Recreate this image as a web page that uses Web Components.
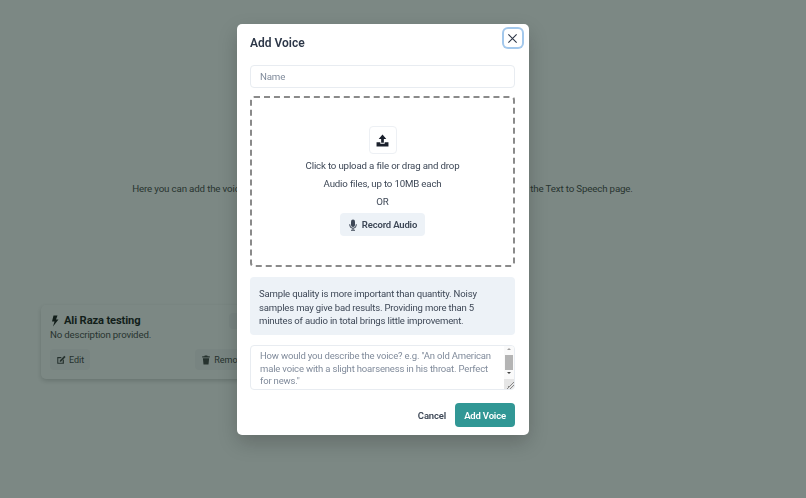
<!DOCTYPE html>
<html>
<head>
<meta charset="utf-8">
<title>Add Voice</title>
<style>
    html, body { margin: 0; height: 100%; }
    body { font-family: Roboto, "Open Sans", sans-serif; overflow: hidden; background: #fff; }
</style>
</head>
<body>
<voice-page></voice-page>
<add-voice-modal></add-voice-modal>

<script>
const ICONS = {
    upload: `<svg viewBox="0 0 24 24" width="13" height="13"><path fill="currentColor" d="M12 1 5 9h4.500v7h5V9H19zM1 15h7v3h8v-3h7v8H1z"/></svg>`,
    mic: `<svg viewBox="0 0 24 24" width="12" height="12"><path fill="currentColor" d="M12 1a4 4 0 0 0-4 4v7a4 4 0 0 0 8 0V5a4 4 0 0 0-4-4z"/><path fill="none" stroke="currentColor" stroke-width="2" d="M5.500 10.500V12a6.500 6.500 0 0 0 13 0v-1.500M12 18.500V22M8 22.500h8"/></svg>`,
    close: `<svg viewBox="0 0 24 24" width="11" height="11"><path fill="none" stroke="currentColor" stroke-width="2.400" d="M3 3l18 18M21 3 3 21"/></svg>`,
    bolt: `<svg viewBox="0 0 24 24" width="12" height="12"><path fill="currentColor" d="M9 1h8l-3 8h5L8 23l3-10H6z"/></svg>`,
    edit: `<svg viewBox="0 0 24 24" width="10" height="10"><path fill="currentColor" d="M3 5h11l-3 3H5.500v10.500H16V13l3-3v11H3zM20 2l3 3-11 11H9v-3z"/></svg>`,
    trash: `<svg viewBox="0 0 24 24" width="10" height="10"><path fill="currentColor" d="M9 1h6l1 2h5v3H3V3h5zM4.500 8h15L18 23H6z"/></svg>`
};

// the small grey button used on the voice card
customElements.define("soft-button", class extends HTMLElement {
    constructor() {
        super();
        this.attachShadow({ mode: "open" });
        this.shadowRoot.innerHTML = `
        <style>
            :host {
                display: inline-flex;
                align-items: center;
                gap: 3px;
                height: 21px;
                padding: 0 6px;
                border-radius: 4px;
                background: #f6f6f8;
                color: #444;
                font-size: 9px;
                font-weight: 400;
            }
            span { display: flex; }
        </style>
        <span>${ICONS[this.dataset.icon] || ""}</span><slot></slot>`;
    }
});

customElements.define("voice-card", class extends HTMLElement {
    constructor() {
        super();
        this.attachShadow({ mode: "open" });
        this.shadowRoot.innerHTML = `
        <style>
            :host {
                display: block;
                box-sizing: border-box;
                width: 290px;
                height: 74px;
                padding: 8px 9px;
                border-radius: 5px;
                background: #fff;
                box-shadow: 0 2px 5px rgba(0, 0, 0, .18);
                color: #1a1a1a;
            }
            h3 {
                display: flex;
                align-items: center;
                height: 15px;
                margin: 0;
                font-size: 11.200px;
                letter-spacing: -.15px;
                line-height: 15px;
                font-weight: 700;
            }
            h3 svg { margin: 0 3px 0 -1px; }
            h3 soft-button { height: 16px; margin-left: 89px; font-weight: 400; letter-spacing: 0; }
            p { margin: 0 0 7px; font-size: 9.700px; letter-spacing: -.17px; line-height: 14px; color: #4a4a4a; }
            .actions { display: flex; gap: 105px; }
        </style>
        <h3>${ICONS.bolt}<slot name="title"></slot><soft-button>Play</soft-button></h3>
        <p><slot name="desc"></slot></p>
        <div class="actions">
            <soft-button data-icon="edit">Edit</soft-button>
            <soft-button data-icon="trash">Remove</soft-button>
        </div>`;
    }
});

customElements.define("voice-page", class extends HTMLElement {
    constructor() {
        super();
        this.attachShadow({ mode: "open" });
        this.shadowRoot.innerHTML = `
        <style>
            :host {
                display: block;
                box-sizing: border-box;
                height: 498px;
                padding: 181px 41px 0;
                background: #fff;
                color: #4a4a4a;
            }
            p {
                margin: 0 0 109px;
                width: 683px;
                text-align: center;
                font-size: 9.750px;
                letter-spacing: -.17px;
                line-height: 15px;
                white-space: nowrap;
            }
        </style>
        <p>Here you can add the voices you want to use. Once added, they will be available for selection on the Text to Speech page.</p>
        <voice-card>
            <span slot="title">Ali Raza testing</span>
            <span slot="desc">No description provided.</span>
        </voice-card>`;
    }
});

customElements.define("add-voice-modal", class extends HTMLElement {
    constructor() {
        super();
        this.attachShadow({ mode: "open" });
        this.shadowRoot.innerHTML = `
        <style>
            :host {
                position: fixed;
                inset: 0;
                box-sizing: border-box;
                display: flex;
                justify-content: center;
                align-items: flex-start;
                padding: 24px 41px 0 0;
                background: rgba(13, 35, 27, .54);
                color: #3d4756;
                font-size: 9.700px;
                letter-spacing: -.17px;
            }
            .dialog {
                position: relative;
                box-sizing: border-box;
                width: 292px;
                height: 411px;
                padding: 10px 13.500px 8px;
                border-radius: 5px;
                background: #fff;
                box-shadow: 0 8px 20px rgba(0, 0, 0, .2);
            }
            h2 { margin: 0 0 13px; font-size: 12px; line-height: 18px; font-weight: 600; color: #2d3748; letter-spacing: 0; }
            .close {
                position: absolute;
                top: 5px;
                right: 7px;
                width: 18px;
                height: 18px;
                display: flex;
                align-items: center;
                justify-content: center;
                border: 0;
                padding: 0;
                background: #fff;
                color: #2d3748;
                border-radius: 4px;
                box-shadow: 0 0 0 2px #a3c8ec;
            }
            .name {
                display: flex;
                align-items: center;
                box-sizing: border-box;
                height: 23px;
                padding: 0 9px;
                border: 1px solid #e8ecf1;
                border-radius: 4px;
                color: #808b9b;
                margin-bottom: 8px;
            }
            .drop {
                box-sizing: border-box;
                height: 171px;
                padding-top: 28px;
                display: flex;
                flex-direction: column;
                align-items: center;
                border: 2px dashed #8a8a8a;
                border-radius: 4px;
                margin-bottom: 10px;
            }
            .upload {
                box-sizing: border-box;
                width: 28px;
                height: 28px;
                display: flex;
                align-items: center;
                justify-content: center;
                border: 1px solid #edf0f4;
                border-radius: 4px;
                color: #1a202c;
                margin-bottom: 3px;
            }
            .drop div.line { line-height: 18px; }
            .record {
                display: flex;
                align-items: center;
                gap: 3px;
                height: 23px;
                margin-top: 2px;
                padding: 0 8px 0 7px;
                border-radius: 4px;
                background: #edf2f7;
                font-size: 9.500px;
                font-weight: 600;
            }
            .note {
                box-sizing: border-box;
                height: 58px;
                padding: 10px 9px 0;
                border-radius: 4px;
                background: #edf2f7;
                font-size: 9.550px;
                line-height: 13.500px;
                margin-bottom: 10px;
            }
            .describe {
                position: relative;
                box-sizing: border-box;
                height: 45px;
                padding: 4px 16px 0 9px;
                border: 1px solid #e8ecf1;
                border-radius: 4px;
                color: #808b9b;
                font-size: 9.500px;
                line-height: 12.500px;
                overflow: hidden;
            }
            .bar {
                position: absolute;
                top: 0;
                right: 0;
                width: 10px;
                height: 100%;
                background: #fafafa;
            }
            .bar i { position: absolute; left: 1px; width: 8px; background: #b4b4b4; top: 9px; height: 15px; }
            .bar b { position: absolute; left: 2.500px; width: 0; height: 0; border: 2.500px solid transparent; }
            .bar .up { top: 0; border-bottom-color: #a0a0a0; }
            .bar .down { top: 26px; border-top-color: #444; }
            .grip {
                position: absolute;
                right: 0;
                bottom: 0;
                width: 10px;
                height: 10px;
                background: linear-gradient(135deg, #e6e6e6 60%, #888 60% 66%, #e6e6e6 66% 78%, #888 78% 84%, #e6e6e6 84%);
            }
            .footer {
                display: flex;
                justify-content: flex-end;
                align-items: center;
                gap: 9px;
                margin-top: 13px;
                font-size: 9.500px;
            }
            .cancel { font-weight: 600; }
            .submit {
                box-sizing: border-box;
                width: 60px;
                height: 24px;
                display: flex;
                align-items: center;
                justify-content: center;
                border-radius: 4px;
                background: #319795;
                color: #fff;
                font-weight: 600;
            }
        </style>
        <div class="dialog">
            <h2>Add Voice</h2>
            <button class="close" aria-label="Close">${ICONS.close}</button>
            <div class="name">Name</div>
            <div class="drop">
                <div class="upload">${ICONS.upload}</div>
                <div class="line">Click to upload a file or drag and drop</div>
                <div class="line">Audio files, up to 10MB each</div>
                <div class="line">OR</div>
                <div class="record">${ICONS.mic}<span>Record Audio</span></div>
            </div>
            <div class="note">Sample quality is more important than quantity. Noisy samples may give bad results. Providing more than 5 minutes of audio in total brings little improvement.</div>
            <div class="describe">How would you describe the voice? e.g. "An old American male voice with a slight hoarseness in his throat. Perfect for news."
                <div class="bar"><b class="up"></b><i></i><b class="down"></b></div>
                <div class="grip"></div>
            </div>
            <div class="footer">
                <span class="cancel">Cancel</span>
                <span class="submit">Add Voice</span>
            </div>
        </div>`;
    }
});
</script>
</body>
</html>
